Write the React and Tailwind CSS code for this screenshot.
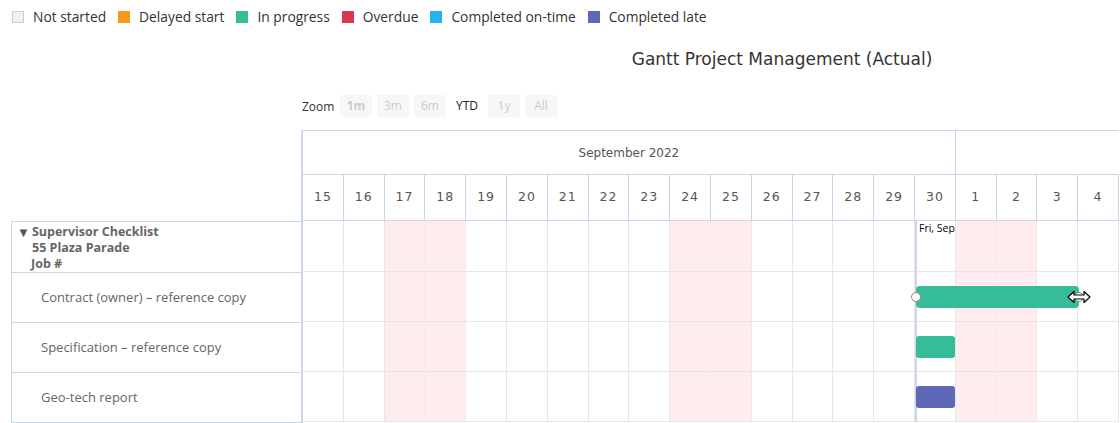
import React from "react";

const legend = [
  { label: "Not started", color: "bg-[#eef0f8] border border-[#c9ccd6]" },
  { label: "Delayed start", color: "bg-[#f7981d]" },
  { label: "In progress", color: "bg-[#36bc98]" },
  { label: "Overdue", color: "bg-[#d8384f]" },
  { label: "Completed on-time", color: "bg-[#27b2f0]" },
  { label: "Completed late", color: "bg-[#5f67b9]" },
];

const days = [15, 16, 17, 18, 19, 20, 21, 22, 23, 24, 25, 26, 27, 28, 29, 30, 1, 2, 3, 4];
// first and second day of each weekend
const weekendA = [2, 9, 16];
const weekendB = [3, 10, 17];

const tasks = [
  "Contract (owner) – reference copy",
  "Specification – reference copy",
  "Geo-tech report",
];

function GridRow({ tall }) {
  return (
    <div className={`grid grid-cols-[repeat(20,minmax(0,1fr))] ${tall ? "h-[51px]" : "h-[50px]"}`}>
      {days.map((d, i) => {
        let cls = "border-r border-b border-[#e6e6e6]";
        if (weekendA.includes(i)) cls = "border-r border-b border-r-[#fde6e9] border-b-[#e6e6e6] bg-[#ffecee]";
        if (weekendB.includes(i)) cls = "border-r border-b border-r-[#f3e4e6] border-b-[#e6e6e6] bg-[#ffecee]";
        return <div key={i} className={cls} />;
      })}
    </div>
  );
}

function ResizeCursor() {
  return (
    <svg width="24" height="14" viewBox="0 0 24 14" className="absolute right-[-12px] top-[4px]">
      <path
        d="M1 7 L7 1.5 V5 H17 V1.5 L23 7 L17 12.5 V9 H7 V12.5 Z"
        fill="#fff"
        stroke="#000"
        strokeWidth="1.2"
        strokeLinejoin="round"
      />
    </svg>
  );
}

export default function App() {
  return (
    <div className="w-[1120px] h-[423px] overflow-hidden bg-white text-[#333] font-['DejaVu_Sans',sans-serif]">
      {/* legend */}
      <div className="flex items-center h-[34px] pl-3 gap-3 font-['Open_Sans',sans-serif] text-[13.8px] text-[#333]">
        {legend.map((l) => (
          <div key={l.label} className="flex items-center gap-[9px]">
            <span className={`w-3 h-3 ${l.color}`} />
            <span>{l.label}</span>
          </div>
        ))}
      </div>

      {/* title */}
      <div className="mt-[6px] h-[40px] flex items-center justify-center pl-[444px] text-[17px] text-[#333]">
        Gantt Project Management (Actual)
      </div>

      {/* zoom */}
      <div className="mt-[15px] h-[22px] pl-[302px] flex items-center gap-[5px] font-['Open_Sans',sans-serif] text-[12px]">
        <span className="text-[#333] w-[33px] pt-[1px]">Zoom</span>
        {["1m", "3m", "6m", "YTD", "1y", "All"].map((z) => (
          <span
            key={z}
            className={`w-[32px] h-[22px] flex items-center justify-center ${
              z === "YTD" ? "bg-white text-[#222]" : "bg-[#f7f7f7] text-[#cccccc]"
            } ${z === "1m" ? "font-bold" : ""}`}
          >
            {z}
          </span>
        ))}
      </div>

      {/* chart */}
      <div className="mt-[13px] flex">
        {/* tree */}
        <div className="w-[302px] flex flex-col pl-[11px] shrink-0">
          <div className="h-[91px]" />
          <div className="border-l border-t border-[#ccd6eb] text-[#666] font-['Open_Sans',sans-serif]">
            <div className="h-[51px] border-b border-[#ccd6eb] pl-[5px] pt-[2px] text-[12.5px] font-bold leading-[16px]">
              <div className="flex items-center">
                <span className="text-[13px] mr-[2px] text-[#555]">▼</span>
                Supervisor Checklist
              </div>
              <div className="pl-[15px]">55 Plaza Parade</div>
              <div className="pl-[14px]">Job #</div>
            </div>
            {tasks.map((t) => (
              <div key={t} className="h-[50px] border-b border-[#ccd6eb] flex items-center pl-[29px] text-[13px]">
                {t}
              </div>
            ))}
          </div>
        </div>

        {/* timeline */}
        <div className="w-[818px] shrink-0 border-l-2 border-[#ccd6eb] -ml-px">
          <div className="grid grid-cols-[repeat(20,minmax(0,1fr))] h-[45px] border-t border-[#ccd6eb] text-[12px] text-[#555]">
            <div className="col-span-16 border-r border-b border-[#ccd6eb] flex items-center justify-center">
              September 2022
            </div>
            <div className="col-span-4 border-b border-[#ccd6eb]" />
          </div>
          <div className="grid grid-cols-[repeat(20,minmax(0,1fr))] h-[46px] text-[12.5px] text-[#555] tracking-[1px]">
            {days.map((d, i) => (
              <div key={i} className="border-r border-b border-[#ccd6eb] flex items-center justify-center">
                {d}
              </div>
            ))}
          </div>

          <div className="relative">
            <GridRow tall />
            <GridRow />
            <GridRow />
            <GridRow />

            {/* today marker */}
            <div className="absolute top-0 bottom-0 left-[75%] w-[2px] bg-[#ccd6eb]" />
            <div className="absolute top-[1px] left-[75%] w-[5%] overflow-hidden whitespace-nowrap pl-[4px] text-[10.5px] leading-[12px] text-black font-['Open_Sans',sans-serif]">
              Fri, Sep
            </div>

            {/* bars */}
            <div className="absolute top-[65px] left-[75%] ml-px w-[20%] h-[22px] rounded-[4px] bg-[#36bc98]">
              <span className="absolute left-[-5px] top-[6px] w-[10px] h-[10px] rounded-full bg-white border border-[#888]" />
              <span className="absolute right-[-5px] top-[6px] w-[10px] h-[10px] rounded-full bg-white border border-[#888]" />
              <ResizeCursor />
            </div>
            <div className="absolute top-[115px] left-[75%] ml-px w-[calc(5%-2px)] h-[22px] rounded-[3px] bg-[#36bc98]" />
            <div className="absolute top-[165px] left-[75%] ml-px w-[calc(5%-2px)] h-[22px] rounded-[3px] bg-[#5f67b9]" />
          </div>
        </div>
      </div>
    </div>
  );
}
